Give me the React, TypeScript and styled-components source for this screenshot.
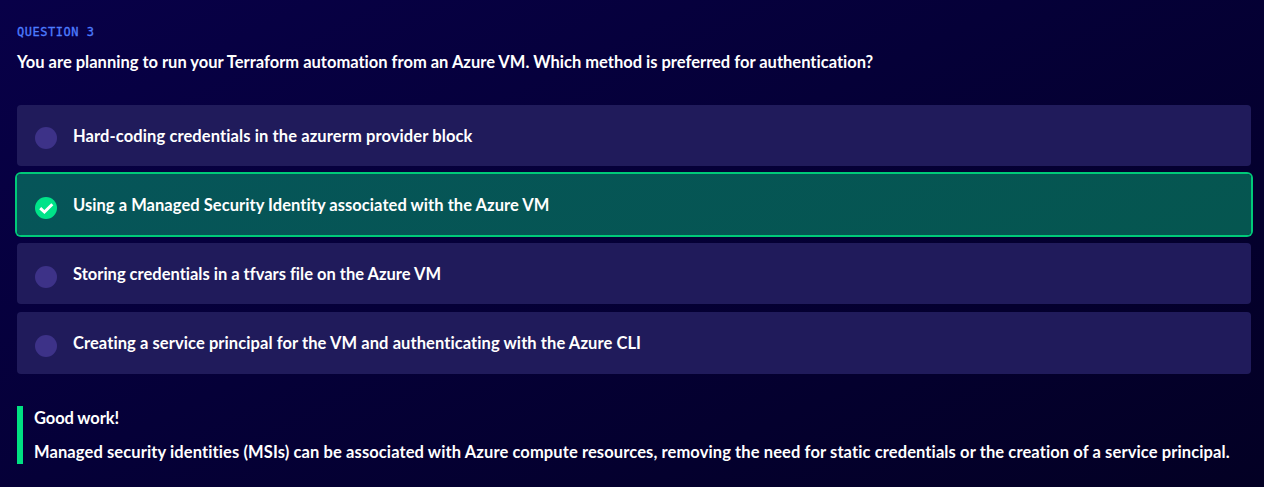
import React from "react";
import styled, { createGlobalStyle, css } from "styled-components";

const GlobalStyle = createGlobalStyle`
  * { box-sizing: border-box; }
  body {
    margin: 0;
    min-height: 100vh;
    background: linear-gradient(154deg, #080048 0%, #050038 45%, #030024 100%);
    color: #fff;
    font-family: Lato, "Liberation Sans", sans-serif;
    font-size: 16.5px;
    font-weight: 700;
    font-variant-ligatures: none;
  }
`;

const Quiz = styled.main`
  padding: 24px 13px 0 17px;
`;

const Eyebrow = styled.div`
  color: #4d7cff;
  font: 400 12px/16px "DejaVu Sans Mono", monospace;
  letter-spacing: 0.53px;
  -webkit-text-stroke: 0.3px currentColor;
`;

const Line = styled.p<{ $tracking?: number }>`
  margin: 0;
  line-height: 24px;
  white-space: nowrap;
  letter-spacing: ${({ $tracking = 0 }) => $tracking}px;
`;

const Question = styled(Line)`
  margin-top: 10px;
`;

const Options = styled.div`
  display: flex;
  flex-direction: column;
  gap: 8px;
  margin-top: 30.7px;
`;

const Option = styled.div<{ $correct?: boolean }>`
  display: flex;
  align-items: flex-start;
  gap: 16px;
  height: 61.23px;
  padding: 18.9px 18px 0;
  border-radius: 4px;
  background: #201b5b;
  ${({ $correct }) =>
    $correct &&
    css`
      background: linear-gradient(154deg, #065559, #055650);
      box-shadow: 0 0 0 2px #00ca79;
    `}
`;

const Marker = styled.span<{ $correct?: boolean }>`
  display: flex;
  flex: none;
  width: 22px;
  height: 22px;
  margin-top: 3.8px;
  border-radius: 50%;
  background: ${({ $correct }) => ($correct ? "#00e389" : "#3d3288")};
`;

const Feedback = styled.section`
  margin-top: 32px;
  height: 58px;
  padding-left: 11px;
  border-left: 6px solid #00e082;
`;

const Verdict = styled(Line)`
  line-height: 25px;
`;

const Explanation = styled(Line)`
  margin-top: 9px;
  line-height: 25px;
`;

const options = [
  { text: "Hard-coding credentials in the azurerm provider block", tracking: 0.1 },
  { text: "Using a Managed Security Identity associated with the Azure VM", tracking: 0.05 },
  { text: "Storing credentials in a tfvars file on the Azure VM", tracking: 0 },
  { text: "Creating a service principal for the VM and authenticating with the Azure CLI", tracking: 0.08 },
];

const correctIndex = 1;

export default function App() {
  return (
    <>
      <GlobalStyle />
      <Quiz>
        <Eyebrow>QUESTION 3</Eyebrow>
        <Question>
          You are planning to run your Terraform automation from an Azure VM. Which method is preferred for authentication?
        </Question>
        <Options>
          {options.map(({ text, tracking }, index) => {
            const correct = index === correctIndex;
            return (
              <Option key={text} $correct={correct}>
                <Marker $correct={correct}>
                  {correct && (
                    <svg width="22" height="22" viewBox="0 0 22 22" fill="none" stroke="#fff" strokeWidth="3">
                      <path d="M5.2 11.2 9.4 15 17.3 7.3" />
                    </svg>
                  )}
                </Marker>
                <Line $tracking={tracking}>{text}</Line>
              </Option>
            );
          })}
        </Options>
        <Feedback>
          <Verdict $tracking={-0.1}>Good work!</Verdict>
          <Explanation $tracking={0.104}>
            Managed security identities (MSIs) can be associated with Azure compute resources, removing the need for static credentials or the creation of a service principal.
          </Explanation>
        </Feedback>
      </Quiz>
    </>
  );
}
